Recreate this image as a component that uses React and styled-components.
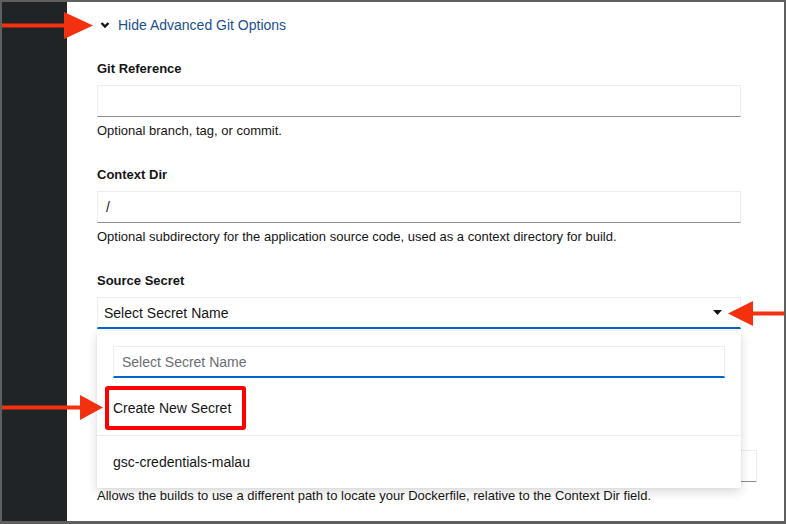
import React from "react";
import styled, { createGlobalStyle } from "styled-components";

const GlobalStyle = createGlobalStyle`
  html, body {
    margin: 0;
    padding: 0;
    background: #ffffff;
  }
  * {
    box-sizing: border-box;
  }
`;

const Frame = styled.div`
  position: relative;
  width: 786px;
  height: 524px;
  border: 2px solid #5f5f5f;
  border-bottom-width: 3px;
  display: flex;
  overflow: hidden;
  font-family: "Liberation Sans", Arial, sans-serif;
  color: #151515;
  background: #ffffff;
`;

const Sidebar = styled.div`
  width: 65px;
  flex-shrink: 0;
  background: #212427;
`;

const Main = styled.div`
  flex: 1;
  padding: 13px 43px 0 30px;
  display: flex;
  flex-direction: column;
`;

const Toggle = styled.div`
  display: flex;
  align-items: center;
  height: 20px;
  padding-left: 3px;
  gap: 8px;
  font-size: 14px;
  color: #1c4f91;
`;

const Group = styled.div`
  margin-top: ${(p) => p.$gap || 26}px;
  display: flex;
  flex-direction: column;
  position: relative;
`;

const Label = styled.div`
  font-size: 13px;
  font-weight: 700;
  line-height: 18px;
  margin-bottom: 7px;
`;

const TextInput = styled.div`
  height: 32px;
  border: 1px solid #ededed;
  border-bottom-color: #8a8d90;
  padding: 0 8px;
  display: flex;
  align-items: center;
  font-size: 14px;
  margin-right: ${(p) => p.$extend || 0}px;
`;

const Helper = styled.div`
  font-size: 13px;
  line-height: 18px;
  margin-top: ${(p) => p.$gap || 5}px;
`;

const SelectWrap = styled.div`
  position: relative;
`;

const SelectToggle = styled.div`
  height: 32px;
  border: 1px solid #ededed;
  border-bottom: 2px solid #0066cc;
  padding: 0 18px 0 6px;
  display: flex;
  align-items: center;
  justify-content: space-between;
  font-size: 14px;
`;

const Menu = styled.div`
  position: absolute;
  top: calc(100% + 2px);
  left: 0;
  right: 0;
  height: 157px;
  background: #ffffff;
  box-shadow: 0 4px 10px rgba(3, 3, 3, 0.14), 0 0 3px rgba(3, 3, 3, 0.06);
  z-index: 2;
  display: flex;
  flex-direction: column;
`;

const SearchArea = styled.div`
  padding: 15px 16px 8px;
`;

const SearchInput = styled.div`
  height: 32px;
  border: 1px solid #ededed;
  border-bottom: 2px solid #0066cc;
  padding: 0 8px;
  display: flex;
  align-items: center;
  font-size: 14px;
  color: #6a6e73;
`;

const MenuItem = styled.div`
  height: ${(p) => p.$height}px;
  padding-left: 16px;
  display: flex;
  align-items: center;
  font-size: 14px;
`;

const Highlight = styled.div`
  height: 44px;
  margin-left: -8px;
  padding: 0 11px 0 4px;
  border: 4px solid #ff0000;
  border-radius: 3px;
  display: flex;
  align-items: center;
`;

const Divider = styled.div`
  height: 1px;
  margin-top: 5px;
  background: #ededed;
`;

const Overlay = styled.svg`
  position: absolute;
  top: -2px;
  left: -2px;
  width: 786px;
  height: 524px;
  pointer-events: none;
  z-index: 5;
`;

const ARROW = "#f4310f";

function Chevron() {
  return (
    <svg width="10" height="8" viewBox="0 0 10 8">
      <polyline
        points="1.5,2 5,5.5 8.5,2"
        fill="none"
        stroke="#151515"
        strokeWidth="2.4"
      />
    </svg>
  );
}

function Caret() {
  return (
    <svg width="9" height="5" viewBox="0 0 9 5">
      <polygon points="0,0 9,0 4.5,5" fill="#151515" />
    </svg>
  );
}

export default function App() {
  return (
    <>
      <GlobalStyle />
      <Frame>
        <Sidebar />
        <Main>
          <Toggle>
            <Chevron />
            <span>Hide Advanced Git Options</span>
          </Toggle>

          <Group $gap={25}>
            <Label>Git Reference</Label>
            <TextInput />
            <Helper>Optional branch, tag, or commit.</Helper>
          </Group>

          <Group>
            <Label>Context Dir</Label>
            <TextInput>/</TextInput>
            <Helper>
              Optional subdirectory for the application source code, used as a
              context directory for build.
            </Helper>
          </Group>

          <Group $gap={26}>
            <Label>Source Secret</Label>
            <SelectWrap>
              <SelectToggle>
                <span>Select Secret Name</span>
                <Caret />
              </SelectToggle>
              <Menu>
                <SearchArea>
                  <SearchInput>Select Secret Name</SearchInput>
                </SearchArea>
                <MenuItem $height={44}>
                  <Highlight>Create New Secret</Highlight>
                </MenuItem>
                <Divider />
                <MenuItem $height={52}>gsc-credentials-malau</MenuItem>
              </Menu>
            </SelectWrap>
          </Group>

          <Group $gap={96}>
            <Label>Dockerfile Path</Label>
            <TextInput $extend={-16} />
            <Helper $gap={5}>
              Allows the builds to use a different path to locate your
              Dockerfile, relative to the Context Dir field.
            </Helper>
          </Group>
        </Main>

        <Overlay viewBox="0 0 786 524">
          <rect x="0" y="23.5" width="66" height="4" fill={ARROW} />
          <polygon points="64,12 93,25.5 64,39" fill={ARROW} />
          <rect x="751" y="311.5" width="35" height="4" fill={ARROW} />
          <polygon points="753,301 728,313.5 753,326" fill={ARROW} />
          <rect x="0" y="405.5" width="82" height="4" fill={ARROW} />
          <polygon points="80,395 103,407.5 80,420" fill={ARROW} />
        </Overlay>
      </Frame>
    </>
  );
}
